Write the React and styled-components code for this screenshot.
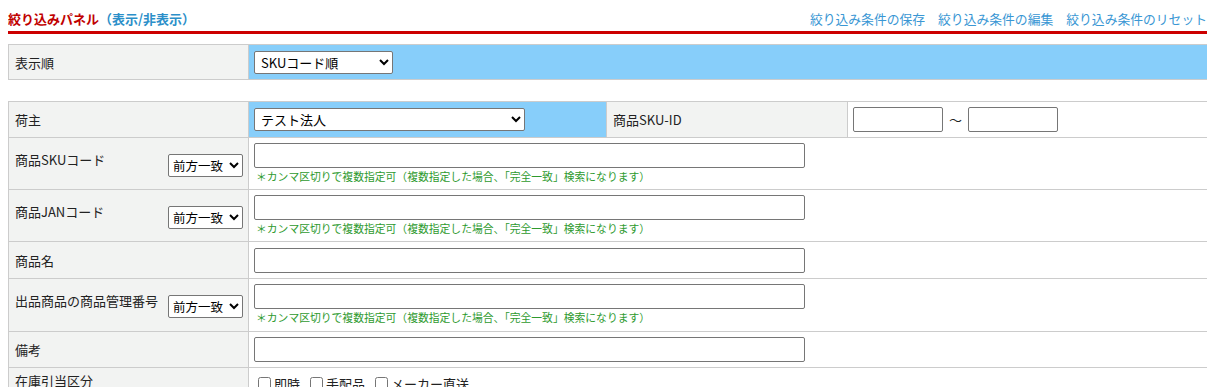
import React from "react";
import styled, { createGlobalStyle } from "styled-components";

const GlobalStyle = createGlobalStyle`
  body {
    margin: 8px;
    background: #fff;
    font-family: "Noto Sans CJK JP", "Noto Sans", sans-serif;
    font-size: 13px;
    color: #222;
  }
`;

const MATCH_OPTIONS = ["前方一致", "完全一致", "部分一致"];
const NOTE = "＊カンマ区切りで複数指定可（複数指定した場合、「完全一致」検索になります）";

const App = () => {
  return (
    <>
      <GlobalStyle />
      <PanelHeader>
        <PanelTitle>
          絞り込みパネル<ToggleLink>（表示/非表示）</ToggleLink>
        </PanelTitle>
        <HeaderLinks>
          <HeaderLink>絞り込み条件の保存</HeaderLink>
          <HeaderLink>絞り込み条件の編集</HeaderLink>
          <HeaderLink>絞り込み条件のリセット</HeaderLink>
        </HeaderLinks>
      </PanelHeader>

      <FormTable>
        <colgroup>
          <col style={{ width: 240 }} />
          <col />
        </colgroup>
        <tbody>
          <tr>
            <LabelCell height={35}>表示順</LabelCell>
            <ValueCell highlight>
              <Select width={139} defaultValue="sku">
                <option value="sku">SKUコード順</option>
                <option value="jan">JANコード順</option>
              </Select>
            </ValueCell>
          </tr>
        </tbody>
      </FormTable>

      <FormTable spaced>
        <colgroup>
          <col style={{ width: 240 }} />
          <col style={{ width: 358 }} />
          <col style={{ width: 241 }} />
          <col />
        </colgroup>
        <tbody>
          <tr>
            <LabelCell height={36}>荷主</LabelCell>
            <ValueCell highlight>
              <Select width={271} defaultValue="test">
                <option value="test">テスト法人</option>
              </Select>
            </ValueCell>
            <LabelCell>商品SKU-ID</LabelCell>
            <ValueCell>
              <RangeWrap>
                <TextInput width={90} height={25} />
                <Tilde>～</Tilde>
                <TextInput width={90} height={25} />
              </RangeWrap>
            </ValueCell>
          </tr>

          <MatchRow label="商品SKUコード" height={52} />
          <MatchRow label="商品JANコード" height={52} />

          <tr>
            <LabelCell height={37}>商品名</LabelCell>
            <ValueCell colSpan={3}>
              <TextInput width={551} />
            </ValueCell>
          </tr>

          <MatchRow label="出品商品の商品管理番号" height={53} />

          <tr>
            <LabelCell height={36}>備考</LabelCell>
            <ValueCell colSpan={3}>
              <TextInput width={551} />
            </ValueCell>
          </tr>

          <tr>
            <LabelCell height={36} top>
              在庫引当区分
            </LabelCell>
            <ValueCell colSpan={3} top>
              <CheckGroup>
                {["即時", "手配品", "メーカー直送"].map(name => (
                  <CheckLabel key={name}>
                    <CheckBox type="checkbox" />
                    {name}
                  </CheckLabel>
                ))}
              </CheckGroup>
            </ValueCell>
          </tr>
        </tbody>
      </FormTable>
    </>
  );
};

const MatchRow = ({ label, height }) => (
  <tr>
    <LabelCell height={height}>
      <LabelWithSelect>
        <span>{label}</span>
        <Select width={75} tight defaultValue={MATCH_OPTIONS[0]}>
          {MATCH_OPTIONS.map(o => (
            <option key={o}>{o}</option>
          ))}
        </Select>
      </LabelWithSelect>
    </LabelCell>
    <ValueCell colSpan={3} top>
      <TextInput width={551} />
      <Note>{NOTE}</Note>
    </ValueCell>
  </tr>
);

const PanelHeader = styled.div`
  display: flex;
  justify-content: space-between;
  align-items: center;
  height: 23px;
  border-bottom: 3px solid #cc0000;
`;

const PanelTitle = styled.div`
  color: #c00000;
  font-weight: bold;
  font-size: 13px;
  line-height: 18px;
  padding-bottom: 2px;
`;

const ToggleLink = styled.span`
  color: #2b8fc9;
  cursor: pointer;
`;

const HeaderLinks = styled.div`
  display: flex;
  gap: 13px;
  padding-bottom: 2px;
`;

const HeaderLink = styled.a`
  color: #3a97d4;
  font-size: 12.8px;
  line-height: 18px;
  cursor: pointer;
`;

const FormTable = styled.table`
  width: 1200px;
  table-layout: fixed;
  border-collapse: collapse;
  margin-top: ${props => (props.spaced ? "21px" : "10px")};
  border: 1px solid #cccccc;
`;

const LabelCell = styled.th`
  background: #f2f3f2;
  border: 1px solid #cccccc;
  text-align: left;
  font-weight: normal;
  font-size: 13px;
  line-height: 17px;
  padding: ${props => (props.top ? "4px 5px 0 6px" : "0 5px 0 6px")};
  height: ${props => (props.height ? `${props.height}px` : "auto")};
  box-sizing: border-box;
  vertical-align: ${props => (props.top ? "top" : "middle")};
  color: #222;
`;

const LabelWithSelect = styled.div`
  display: flex;
  justify-content: space-between;
  align-items: flex-start;

  & > select {
    margin-top: 3px;
  }
`;

const ValueCell = styled.td`
  background: ${props => (props.highlight ? "#87cefa" : "#ffffff")};
  border: 1px solid #cccccc;
  padding: ${props => (props.top ? "5px 5px 4px" : "0 5px")};
  vertical-align: ${props => (props.top ? "top" : "middle")};
`;

const Select = styled.select`
  width: ${props => props.width}px;
  height: 23px;
  font-family: "Noto Sans CJK JP", sans-serif;
  font-size: ${props => (props.tight ? "12.5px" : "13px")};
  color: #000;
  background: #fff;
  border: 1px solid #767676;
  border-radius: 2px;
  padding: ${props => (props.tight ? "0" : "0 2px")};
  box-sizing: border-box;
`;

const TextInput = styled.input`
  display: block;
  width: ${props => props.width}px;
  height: ${props => props.height || 25}px;
  box-sizing: border-box;
  border: 1px solid #767676;
  border-radius: 2px;
  padding: 1px 3px;
  font-size: 13px;
  background: #fff;
`;

const RangeWrap = styled.div`
  display: flex;
  align-items: center;
`;

const Tilde = styled.span`
  width: 25px;
  text-align: center;
  font-size: 13px;
  color: #222;
`;

const Note = styled.div`
  color: #2e9a2e;
  font-size: 10.8px;
  line-height: 16px;
  margin-left: 2px;
`;

const CheckGroup = styled.div`
  display: flex;
  gap: 6px;
  align-items: center;
  padding-top: 2px;
`;

const CheckLabel = styled.label`
  display: flex;
  align-items: center;
  font-size: 13px;
  line-height: 17px;
  color: #222;
`;

const CheckBox = styled.input`
  width: 13px;
  height: 13px;
  margin: 0 3px 0 4px;
`;

export default App;
